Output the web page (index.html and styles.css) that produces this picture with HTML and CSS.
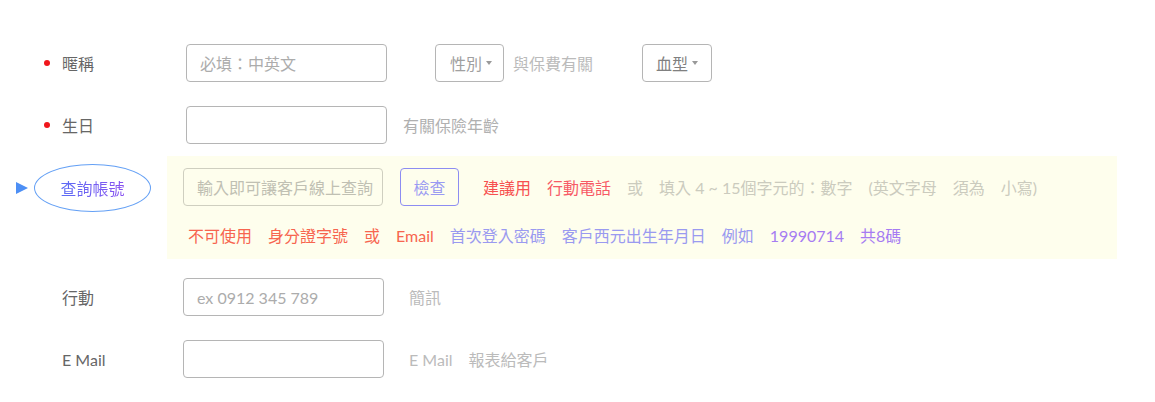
FILE: index.html
```html
<!DOCTYPE html>
<html lang="zh-Hant">
<head>
<meta charset="utf-8">
<link rel="stylesheet" href="styles.css">
</head>
<body>
<div class="form">
  <div class="row">
    <div class="label"><span class="dot"></span>暱稱</div>
    <input class="field" type="text" placeholder="必填：中英文">
    <div class="select sex">性別<span class="caret"></span></div>
    <span class="hint hint-sex">與保費有關</span>
    <div class="select blood">血型<span class="caret"></span></div>
  </div>
  <div class="row row-tight">
    <div class="label"><span class="dot"></span>生日</div>
    <input class="field" type="text">
    <span class="hint hint-age">有關保險年齡</span>
  </div>
  <div class="row-account">
    <div class="account-left">
      <span class="tri"></span>
      <span class="oval"><span class="oval-text">查詢帳號</span></span>
    </div>
    <div class="account-box">
      <div class="line1">
        <input class="field field-yellow" type="text" placeholder="輸入即可讓客戶線上查詢">
        <button class="check">檢查</button>
        <span class="t red first">建議用</span>
        <span class="t red2">行動電話</span>
        <span class="t grey">或</span>
        <span class="t grey">填入 4 ~ 15個字元的：數字</span>
        <span class="t grey">(英文字母</span>
        <span class="t grey">須為</span>
        <span class="t grey">小寫)</span>
      </div>
      <div class="line2">
        <span class="t red3">不可使用</span>
        <span class="t red3">身分證字號</span>
        <span class="t red3">或</span>
        <span class="t red3">Email</span>
        <span class="t blue">首次登入密碼</span>
        <span class="t blue">客戶西元出生年月日</span>
        <span class="t blue">例如</span>
        <span class="t purple">19990714</span>
        <span class="t purple">共8碼</span>
      </div>
    </div>
  </div>
  <div class="row row-b">
    <div class="label label-b">行動</div>
    <input class="field" type="text" placeholder="ex 0912 345 789">
    <span class="hint hint-b">簡訊</span>
  </div>
  <div class="row row-b">
    <div class="label label-b">E Mail</div>
    <input class="field" type="text">
    <span class="hint hint-b">E Mail</span>
    <span class="hint hint-c">報表給客戶</span>
  </div>
</div>
</body>
</html>
```

FILE: styles.css
```css
* { box-sizing: border-box; }
body {
  margin: 0;
  background: #fff;
  font-family: Lato, "Noto Sans CJK TC", sans-serif;
  font-size: 16px;
  font-weight: 400;
  color: #666;
}
.form { padding-top: 44px; }
.row {
  display: flex;
  align-items: center;
  height: 38px;
  margin-bottom: 24px;
}
.row-tight { margin-bottom: 12px; }
.label {
  width: 186px;
  display: flex;
  align-items: center;
  padding-left: 44px;
  color: #666;
}
.label-b { width: 183px; padding-left: 62px; }
.dot {
  width: 6px;
  height: 6px;
  border-radius: 50%;
  background: #f0161b;
  margin-right: 12px;
}
.field {
  width: 201px;
  height: 38px;
  border: 1px solid #b5b5b5;
  border-radius: 4px;
  padding: 0 13px;
  font-family: Lato, "Noto Sans CJK TC", sans-serif;
  font-size: 16px;
  font-weight: 400;
  color: #555;
  background: #fff;
  outline: none;
}
.field::placeholder { color: #acacac; }
.select {
  height: 38px;
  border: 1px solid #b5b5b5;
  border-radius: 4px;
  display: flex;
  align-items: center;
  padding: 0 8px 0 14px;
  color: #a0a0a0;
}
.sex { margin-left: 48px; width: 69px; }
.blood { margin-left: 49px; width: 70px; padding-left: 13px; color: #808080; }
.caret {
  width: 0;
  height: 0;
  border-left: 3.5px solid transparent;
  border-right: 3.5px solid transparent;
  border-top: 4px solid #999;
  margin-left: 4px;
}
.hint { color: #bbb; }
.hint-sex { margin-left: 9px; }
.hint-age { margin-left: 16px; color: #b0b0b0; }
.hint-b { margin-left: 25px; color: #bbb; }
.hint-c { margin-left: 16px; }

.row-account {
  display: flex;
  align-items: flex-start;
  margin-bottom: 19px;
}
.account-left {
  width: 167px;
  display: flex;
  align-items: center;
  padding-top: 8px;
  padding-left: 16px;
}
.tri {
  width: 0;
  height: 0;
  border-top: 6px solid transparent;
  border-bottom: 6px solid transparent;
  border-left: 12px solid #4d8ff5;
  margin-right: 6px;
}
.oval {
  width: 117px;
  height: 48px;
  border: 1.5px solid #64a0f5;
  border-radius: 50%;
  display: flex;
  align-items: center;
  justify-content: center;
}
.oval-text {
  background: linear-gradient(90deg, #5a6cf5, #8a52f0);
  -webkit-background-clip: text;
  background-clip: text;
  color: transparent;
}
.account-box {
  width: 950px;
  height: 103px;
  background: #fefeed;
  padding: 12px 16px 0 16px;
}
.line1 {
  display: flex;
  align-items: center;
  height: 38px;
}
.field-yellow {
  width: 200px;
  padding: 0 6px 0 13px;
  border-color: #cfcfc0;
  background: #fefeed;
}
.field-yellow::placeholder { color: #c0c0b3; }
.check {
  margin-left: 17px;
  width: 59px;
  height: 38px;
  border: 1px solid #8d8df2;
  border-radius: 4px;
  background: transparent;
  color: #9a9af2;
  font-family: Lato, "Noto Sans CJK TC", sans-serif;
  font-size: 16px;
  font-weight: 400;
  padding: 0;
}
.t { margin-right: 16px; white-space: nowrap; }
.first { margin-left: 24px; }
.red { color: #f75050; }
.red2 { color: #f75a66; }
.red3 { color: #f7654f; }
.grey { color: #cbcbbe; }
.blue { color: #9a9af0; }
.purple { color: #a67cf2; }
.line2 {
  display: flex;
  align-items: center;
  height: 22px;
  margin-top: 18px;
  padding-left: 5px;
}
```
